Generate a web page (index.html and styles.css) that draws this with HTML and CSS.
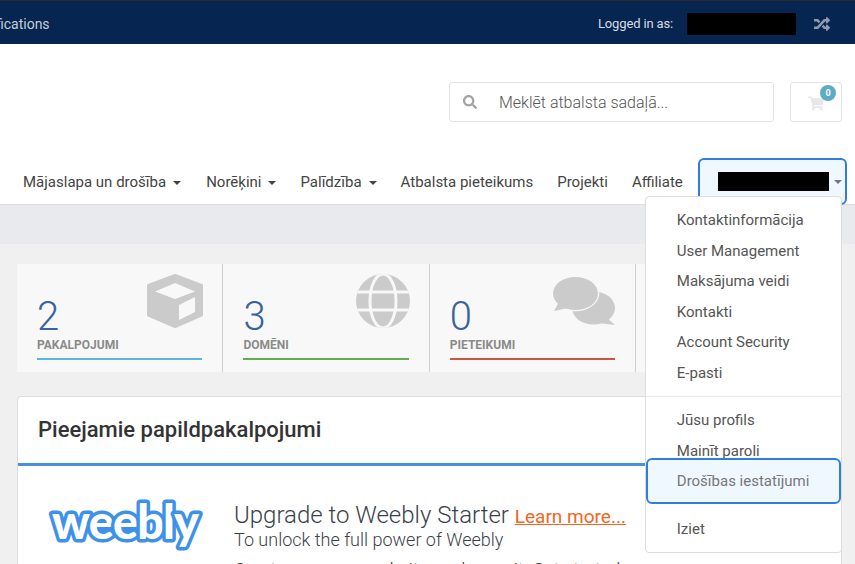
FILE: index.html
```html
<!DOCTYPE html>
<html lang="lv">
<head>
<meta charset="utf-8">
<title>Client Area</title>
<link rel="stylesheet" href="styles.css">
</head>
<body>
<header class="topbar">
  <span class="topbar-left">Notifications</span>
  <div class="topbar-right">
    <span class="logged">Logged in as:</span>
    <span class="redact redact-top"></span>
    <svg class="shuffle" viewBox="0 0 512 512" width="16" height="16"><path fill="#a5afc0" d="M504.971 359.029c9.373 9.373 9.373 24.569 0 33.941l-80 79.984c-15.01 15.01-40.971 4.49-40.971-16.971V416h-58.785a12.004 12.004 0 0 1-8.773-3.812l-70.556-75.596 53.333-57.143L352 336h32v-39.981c0-21.438 25.943-31.998 40.971-16.971l80 79.981zM12 176h84l52.781 56.551 53.333-57.143-70.556-75.596A11.999 11.999 0 0 0 122.785 96H12c-6.627 0-12 5.373-12 12v56c0 6.627 5.373 12 12 12zm372 0v39.984c0 21.46 25.961 31.98 40.971 16.971l80-79.984c9.373-9.373 9.373-24.569 0-33.941l-80-79.981C409.943 24.021 384 34.582 384 56.019V96h-58.785a12.004 12.004 0 0 0-8.773 3.812L96 336H12c-6.627 0-12 5.373-12 12v56c0 6.627 5.373 12 12 12h110.785c3.326 0 6.503-1.381 8.773-3.812L352 176h32z"/></svg>
  </div>
</header>

<section class="brandrow">
  <div class="search">
    <svg class="search-icon" viewBox="0 0 512 512" width="14" height="14"><path fill="#a3a3a3" d="M505 442.7L405.3 343c-4.5-4.5-10.6-7-17-7H372c27.6-35.3 44-79.7 44-128C416 93.1 322.9 0 208 0S0 93.1 0 208s93.1 208 208 208c48.3 0 92.7-16.4 128-44v16.3c0 6.4 2.500 12.500 7 17l99.700 99.700c9.400 9.400 24.600 9.400 33.900 0l28.300-28.300c9.400-9.400 9.400-24.600.1-34zM208 336c-70.700 0-128-57.200-128-128 0-70.700 57.200-128 128-128 70.700 0 128 57.200 128 128 0 70.700-57.200 128-128 128z"/></svg>
    <span class="search-text">Meklēt atbalsta sadaļā...</span>
  </div>
  <div class="cart">
    <svg viewBox="0 0 576 512" width="16" height="15"><path fill="#e8e8e8" d="M528.12 301.319l47.273-208C578.806 78.301 567.391 64 551.99 64H159.208l-9.166-44.81C147.758 8.021 137.93 0 126.529 0H24C10.745 0 0 10.745 0 24v16c0 13.255 10.745 24 24 24h69.883l70.248 343.435C147.325 417.1 136 435.222 136 456c0 30.928 25.072 56 56 56s56-25.072 56-56c0-15.674-6.447-29.835-16.824-40h209.647C430.447 426.165 424 440.326 424 456c0 30.928 25.072 56 56 56s56-25.072 56-56c0-22.172-12.888-41.332-31.579-50.405l5.517-24.276c3.413-15.018-8.002-29.319-23.403-29.319H218.117l-6.545-32h293.145c11.206 0 20.92-7.754 23.403-18.681z"/></svg>
    <span class="badge">0</span>
  </div>
</section>

<nav class="mainnav">
  <a class="nav-item caret">Mājaslapa un drošība</a>
  <a class="nav-item caret">Norēķini</a>
  <a class="nav-item caret">Palīdzība</a>
  <a class="nav-item">Atbalsta pieteikums</a>
  <a class="nav-item">Projekti</a>
  <a class="nav-item">Affiliate</a>
  <div class="account">
    <span class="redact redact-account"></span>
    <span class="account-caret"></span>
    <ul class="menu">
      <li>Kontaktinformācija</li>
      <li>User Management</li>
      <li>Maksājuma veidi</li>
      <li>Kontakti</li>
      <li>Account Security</li>
      <li>E-pasti</li>
      <li class="divider"></li>
      <li>Jūsu profils</li>
      <li>Mainīt paroli</li>
      <li class="focused">Drošības iestatījumi</li>
      <li class="divider divider-quiet"></li>
      <li>Iziet</li>
    </ul>
  </div>
</nav>

<div class="strip"></div>

<main class="content">
  <div class="tiles">
    <div class="tile tile-blue">
      <svg class="tile-icon" viewBox="0 0 56 54" width="56" height="54"><path fill="#cbcbcb" stroke="#cbcbcb" stroke-width="3" stroke-linejoin="round" fill-rule="evenodd" d="M28 1.500 L54.500 11.500 V41 L28 52.500 L1.500 41 V11.500 Z M28 9 L8 18 L28 25 L48 18 Z M48 23 L32 31 V46 L48 38 Z"/><path fill="#f8f8f8" d="M28 9 L48 17.500 L28 25 L8 17.500 Z M48 23 V38 L32 46 V31 Z"/></svg>
      <div class="tile-num">2</div>
      <div class="tile-label">PAKALPOJUMI</div>
    </div>
    <div class="tile tile-green">
      <svg class="tile-icon" viewBox="0 0 54 54" width="54" height="54"><defs><clipPath id="g"><circle cx="27" cy="27" r="27"/></clipPath></defs><circle cx="27" cy="27" r="27" fill="#cbcbcb"/><g clip-path="url(#g)" fill="none" stroke="#f8f8f8" stroke-width="3"><ellipse cx="27" cy="27" rx="13" ry="27"/><path d="M0 18H54M0 36H54"/></g></svg>
      <div class="tile-num">3</div>
      <div class="tile-label">DOMĒNI</div>
    </div>
    <div class="tile tile-red">
      <svg class="tile-icon tile-icon-chat" viewBox="0 0 62 49" width="62" height="49"><ellipse cx="40.500" cy="31" rx="21.500" ry="16.500" fill="#cbcbcb"/><path fill="#cbcbcb" d="M54 41 L62 48 L46 46Z"/><ellipse cx="22.500" cy="16.500" rx="23.800" ry="17.800" fill="#f8f8f8"/><ellipse cx="22.500" cy="16.500" rx="22.500" ry="16.500" fill="#cbcbcb"/><path fill="#cbcbcb" d="M6 25 L1 34 L15 31Z"/></svg>
      <div class="tile-num">0</div>
      <div class="tile-label">PIETEIKUMI</div>
    </div>
    <div class="tile tile-empty"></div>
  </div>

  <section class="panel">
    <h2 class="panel-title">Pieejamie papildpakalpojumi</h2>
    <div class="panel-body">
      <div class="logo-wrap">
        <svg class="weebly" viewBox="0 0 155 54" width="155" height="54"><text class="weebly-text" x="4" y="38" textLength="147" lengthAdjust="spacing">weebly</text></svg>
      </div>
      <div class="promo">
        <div class="promo-head">Upgrade to Weebly Starter <a class="learn">Learn more...</a></div>
        <div class="promo-sub">To unlock the full power of Weebly</div>
        <div class="promo-line">Create your own website, and grow it. Get started</div>
      </div>
    </div>
  </section>
</main>
</body>
</html>
```

FILE: styles.css
```css
* { box-sizing: border-box; }
html, body { margin: 0; padding: 0; height: 564px; overflow: hidden; }
body { font-family: Roboto, "Liberation Sans", sans-serif; background: #f0f0f0; color: #333; }

.topbar { height: 44px; padding-top: 2px; background: #062550; border-top: 1px solid #2a2a2a; display: flex; justify-content: space-between; align-items: center; font-size: 13px; color: #d7dce4; }
.topbar-left { margin-left: -30px; font-size: 14px; color: #c6cdd8; }
.topbar-right { display: flex; align-items: center; margin-right: 25px; }
.logged { letter-spacing: -0.15px; }
.redact { display: block; background: #000; }
.redact-top { width: 109px; height: 22px; margin-left: 14px; margin-right: 18px; }
.shuffle { opacity: 0.85; }

.brandrow { height: 116px; background: #fff; display: flex; justify-content: flex-end; align-items: flex-start; padding: 38px 13px 0 0; gap: 16px; }
.search { width: 325px; height: 40px; border: 1px solid #e3e3e3; border-radius: 3px; display: flex; align-items: center; padding-left: 13px; }
.search-text { margin-left: 22px; font-size: 16px; font-weight: 300; color: #555; }
.cart { width: 52px; height: 40px; border: 1px solid #e3e3e3; border-radius: 3px; position: relative; display: flex; align-items: center; justify-content: center; padding-top: 2px; }
.badge { position: absolute; top: 2px; right: 5px; width: 16px; height: 16px; border-radius: 50%; background: #5bacc6; color: #fff; font-size: 9px; font-weight: 700; display: flex; align-items: center; justify-content: center; }

.mainnav { height: 45px; background: #fff; border-bottom: 1px solid #ddd; display: flex; align-items: center; padding: 0 0 0 23px; font-size: 15px; color: #444; }
.nav-item { margin-right: 24px; white-space: nowrap; }
.nav-item:first-child { margin-right: 25px; }
.caret::after { content: ""; display: inline-block; margin-left: 7px; vertical-align: 2px; border: 4px solid transparent; border-top-color: #444; border-bottom: 0; }
.account { position: relative; margin-left: -9px; margin-top: -2px; align-self: flex-start; width: 149px; height: 47px; background: #f0f8ff; border: 2px solid #2f7de1; border-radius: 6px; display: flex; align-items: center; flex: none; }
.redact-account { width: 111px; height: 19px; margin-left: 18px; }
.account-caret { margin-left: 5px; border: 4px solid transparent; border-top-color: #777; border-bottom: 0; }

.menu { position: absolute; top: 36px; right: 3px; width: 197px; height: 357px; margin: 0; padding: 8px 0 0; list-style: none; background: #fff; border: 1px solid #ddd; border-radius: 4px; font-size: 15px; color: #555; z-index: 5; }
.menu li { height: 30.5px; line-height: 30.5px; padding-left: 31px; }
.menu .divider { height: 1px; margin: 8px 0; padding: 0; background: #e8e8e8; }
.menu .divider-quiet { background: transparent; margin: 8px 0 8.5px; }
.menu .focused { position: relative; margin: -7.75px 0 -7.75px 0; padding-left: 29px; height: 46px; line-height: 42px; background: #f0f8ff; color: #777; border: 2px solid #2f7de1; border-radius: 6px; }

.strip { height: 39px; background: #e9eaed; }

.content { padding: 20px 0 0 17px; }
.tiles { display: flex; height: 108px; width: 825px; background: #f8f8f8; }
.tile { position: relative; width: 206.4px; padding: 35px 20px 0; border-right: 1px solid #cfcfcf; }
.tile-empty { border-right: 0; flex: 1; }
.tile-num { font-size: 40px; line-height: 36px; font-weight: 300; color: #3a629c; }
.tile-label { font-size: 12px; font-weight: 700; color: #8a8a8a; margin-top: 0; height: 20px; line-height: 20px; }
.tile::after { content: ""; display: block; height: 2px; margin-top: 3px; }
.tile-blue::after { background: #5ab4e0; }
.tile-green::after { background: #62ad54; }
.tile-red::after { background: #d0533f; }
.tile-icon { position: absolute; top: 10px; right: 19px; }
.tile-icon-chat { top: 13px; right: 20px; }

.panel { margin-top: 24px; width: 825px; background: #fff; border: 1px solid #ddd; border-radius: 4px; height: 200px; }
.panel-title { margin: 0; height: 69px; padding: 0 0 1px 20px; display: flex; align-items: center; font-size: 22px; font-weight: 500; color: #333; border-bottom: 3px solid #4a90e2; border-radius: 3px 3px 0 0; }
.panel-body { display: flex; padding: 35px 0 0 30px; }
.logo-wrap { width: 186px; flex: none; }
.weebly { display: block; overflow: visible; }
.weebly-text { font-family: Lato, "Open Sans", sans-serif; font-weight: 900; font-size: 47px; fill: #fff; stroke: #3d91ea; stroke-width: 7px; stroke-linejoin: round; paint-order: stroke; }
.promo-head { font-size: 24px; font-weight: 300; line-height: 28px; color: #3a3f4a; white-space: nowrap; }
.learn { font-size: 19px; font-weight: 400; color: #f26522; text-decoration: underline; }
.promo-sub { margin-top: -2px; font-size: 18px; font-weight: 300; line-height: 22px; color: #3a3f4a; white-space: nowrap; }
.promo-line { margin-top: 8px; font-size: 18px; line-height: 21px; font-weight: 300; color: #333; white-space: nowrap; }
```
